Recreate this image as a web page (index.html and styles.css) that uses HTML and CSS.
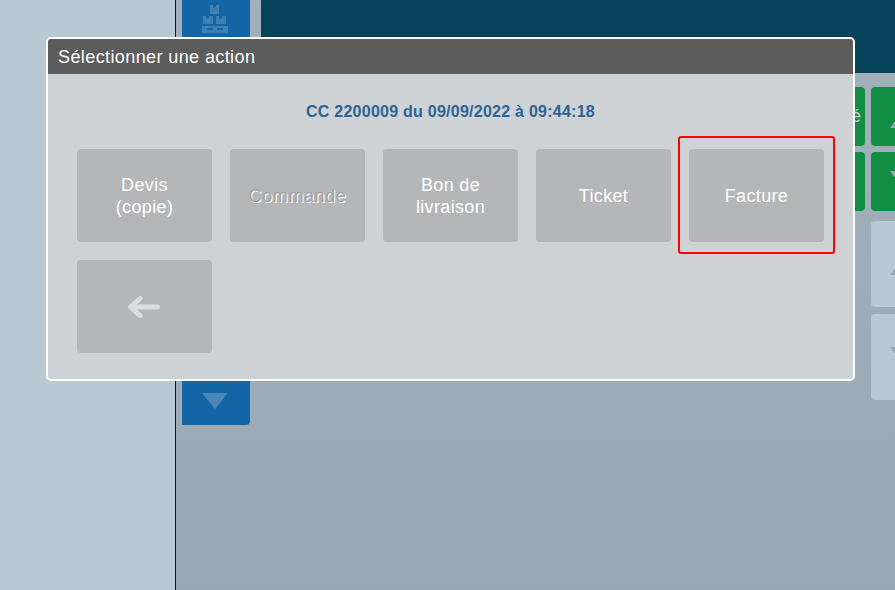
FILE: index.html
```html
<!DOCTYPE html>
<html lang="fr">
<head>
<meta charset="utf-8">
<title>Sélectionner une action</title>
<link rel="stylesheet" href="styles.css">
</head>
<body>
<div class="app">
  <aside class="side"></aside>
  <main class="main">
    <nav class="rail">
      <svg class="rail-icon" width="26" height="28" viewBox="0 0 26 28" aria-hidden="true">
        <path d="M8 0h3v2.500h3V0h3v9H8zM1 11h3v2.500h3V11h4v8H1zM14 11h3v2.500h3V11h4v8H14zM0 21h26v7H0zM5 23v2h6v-2zM15 23v2h6v-2z" fill-rule="evenodd"/>
      </svg>
      <svg class="rail-arrow" width="26" height="16" viewBox="0 0 26 16" aria-hidden="true"><path d="M0 0h26L13 16z"/></svg>
    </nav>
    <div class="content">
      <header class="top"></header>
      <div class="tools">
        <div class="pad-row">
          <div class="green green-wide"><span class="green-label">é</span></div>
          <div class="green green-side"><svg class="tri tri-up" width="24" height="16" viewBox="0 0 24 16" aria-hidden="true"><path d="M12 0l12 16H0z"/></svg></div>
        </div>
        <div class="pad-row">
          <div class="green green-wide"></div>
          <div class="green green-side"><svg class="tri tri-down" width="24" height="16" viewBox="0 0 24 16" aria-hidden="true"><path d="M0 0h24L12 16z"/></svg></div>
        </div>
        <div class="pale pale-first"><svg class="tri tri-up" width="24" height="16" viewBox="0 0 24 16" aria-hidden="true"><path d="M12 0l12 16H0z"/></svg></div>
        <div class="pale"><svg class="tri tri-down" width="24" height="16" viewBox="0 0 24 16" aria-hidden="true"><path d="M0 0h24L12 16z"/></svg></div>
      </div>
    </div>
  </main>
</div>

<section class="modal">
  <h1 class="modal-title">Sélectionner une action</h1>
  <div class="modal-body">
    <p class="doc">CC 2200009 du 09/09/2022 à 09:44:18</p>
    <div class="actions">
      <button class="action">Devis<br>(copie)</button>
      <button class="action disabled">Commande</button>
      <button class="action">Bon de<br>livraison</button>
      <button class="action">Ticket</button>
      <button class="action marked">Facture</button>
      <button class="action" aria-label="Retour">
        <svg class="back-icon" width="34" height="24" viewBox="0 0 34 24" aria-hidden="true"><path class="back" d="M13 3.500L3.500 12l9.500 8.500M3.500 12h27"/></svg>
      </button>
    </div>
  </div>
</section>
</body>
</html>
```
FILE: styles.css
```css
* { box-sizing: border-box; }
html, body { margin: 0; height: 100%; overflow: hidden; }
body { font-family: "Liberation Sans", Arial, sans-serif; position: relative; }

.app { display: flex; width: 895px; height: 590px; }
.side { width: 176px; background: #b8c9d3; border-right: 1px solid #0b1a22; flex: none; }
.main {
  flex: 1; display: flex; align-items: flex-start; gap: 11px;
  padding-left: 6px;
  background: linear-gradient(#a1b0ba, #9aa9b3);
  height: 590px;
}
.rail {
  width: 68px; height: 425px; flex: none;
  background: #1465a5; border-radius: 0 0 4px 0;
  display: flex; flex-direction: column; justify-content: space-between; align-items: center;
  padding: 5px 2px 16px 0;
}
.rail-icon { fill: #3f80b3; }
.rail-arrow { fill: #4a87b6; }
.content { flex: 1; min-width: 0; }
.top { height: 73px; background: #07445c; }
.tools { display: flex; flex-direction: column; align-items: flex-end; padding-top: 14px; }
.pad-row { display: flex; gap: 6px; margin-bottom: 6px; }
.green { height: 59px; background: #118d44; border-radius: 4px; display: flex; align-items: center; }
.green-wide { width: 70px; justify-content: flex-end; padding-right: 4px; }
.green-label { color: #c2cfc9; font-size: 18px; }
.green-side { width: 24px; border-radius: 4px 0 0 4px; overflow: hidden; }
.pale {
  width: 24px; height: 86px; margin-bottom: 7px; background: #b8c9d3;
  border-radius: 4px 0 0 4px; overflow: hidden; display: flex; align-items: center;
}
.pale-first { margin-top: 4px; }
.tri { flex: none; margin-left: 19px; fill: #9aa9b3; }
.tri-up { margin-top: 6px; }
.tri-down { margin-bottom: 5px; }

.modal {
  position: absolute; left: 46px; top: 37px; width: 809px; height: 344px;
  border: 2px solid #fff; border-radius: 5px; overflow: hidden;
  background: #ced2d5; display: flex; flex-direction: column;
}
.modal-title {
  margin: 0; height: 35px; padding: 0 10px; background: #5c5c5c; color: #fff;
  font-size: 18px; font-weight: 400; line-height: 36px; letter-spacing: .4px;
}
.modal-body { flex: 1; padding: 0 29px; }
.doc {
  margin: 0; padding-top: 29px; height: 75px; text-align: center;
  color: #2a6496; font-size: 16px; font-weight: 700; line-height: 18px; letter-spacing: .25px;
}
.actions { display: flex; flex-wrap: wrap; gap: 18px; }
.action {
  position: relative; width: 135px; height: 93px; padding: 0; border: 0; border-radius: 4px;
  background: #b5b6b8; color: #fff;
  font-family: inherit; font-size: 18px; line-height: 22px; letter-spacing: .35px;
  display: flex; align-items: center; justify-content: center; text-align: center;
}
.disabled { color: #a3a3a3; text-shadow: 1px 1px 0 #fff; letter-spacing: .6px; }
.marked::after {
  content: ""; position: absolute; left: -11px; top: -13px; right: -11px; bottom: -12px;
  border: 2px solid #f00; border-radius: 3px;
}
.back-icon { margin-right: 1px; }
.back { fill: none; stroke: #dcdddf; stroke-width: 5; stroke-linecap: round; stroke-linejoin: round; }
```
